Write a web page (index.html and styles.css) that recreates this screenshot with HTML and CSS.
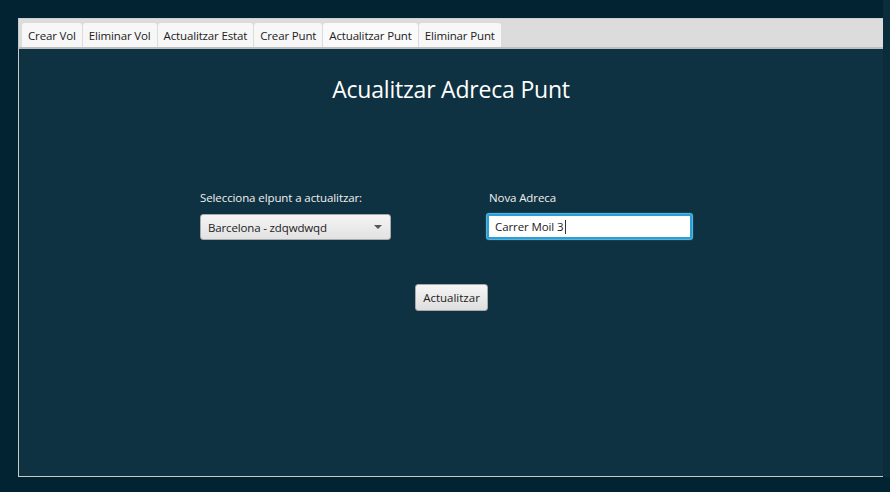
FILE: index.html
```html
<!DOCTYPE html>
<html>
<head>
<meta charset="utf-8">
<link rel="stylesheet" href="styles.css">
</head>
<body>
<div class="stage">
  <div class="window">
    <div class="tabbar">
      <div class="tab">Crear Vol</div>
      <div class="tab">Eliminar Vol</div>
      <div class="tab">Actualitzar Estat</div>
      <div class="tab">Crear Punt</div>
      <div class="tab active">Actualitzar Punt</div>
      <div class="tab">Eliminar Punt</div>
    </div>
    <div class="content">
      <h1 class="title">Acualitzar Adreca Punt</h1>
      <div class="form">
        <div class="field">
          <div class="label">Selecciona elpunt a actualitzar:</div>
          <div class="combo">
            <span>Barcelona - zdqwdwqd</span>
            <span class="arrow"></span>
          </div>
        </div>
        <div class="field">
          <div class="label indent">Nova Adreca</div>
          <div class="input"><span>Carrer Moil 3</span><span class="caret"></span></div>
        </div>
      </div>
      <div class="actions">
        <div class="button">Actualitzar</div>
      </div>
    </div>
  </div>
  <div class="edge"></div>
</div>
</body>
</html>
```

FILE: styles.css
```css
html, body {
  margin: 0;
  padding: 0;
}
body {
  width: 890px;
  height: 492px;
  overflow: hidden;
  background: #022331;
  font-family: "Open Sans", "Noto Sans", sans-serif;
  font-size: 12px;
  color: #333;
}
.stage {
  display: flex;
  align-items: flex-start;
  padding-left: 18px;
}
.window {
  margin-top: 18px;
  width: 864px;
  height: 458px;
  border-left: 1px solid #c9c9c9;
  border-bottom: 1px solid #c9c9c9;
  display: flex;
  flex-direction: column;
  background: #0f3242;
}
.edge {
  width: 7px;
  height: 477px;
  background: #0b2c3b;
}
.tabbar {
  height: 28px;
  background: #dcdcdc;
  border-top: 1px solid #cfcfcf;
  border-bottom: 2px solid #bdbdbd;
  display: flex;
  align-items: flex-end;
  padding-left: 3px;
  gap: 1px;
}
.tab {
  height: 24px;
  line-height: 25px;
  padding: 0 6px;
  background: #f7f7f7;
  border-radius: 3px 3px 0 0;
  color: #222;
  font-size: 11.5px;
  letter-spacing: -0.15px;
  white-space: nowrap;
}
.tab.active {
  background: #fafafa;
}
.content {
  flex: 1;
  display: flex;
  flex-direction: column;
}
.title {
  margin: 0;
  padding-top: 25px;
  text-align: center;
  font-weight: 400;
  font-size: 23px;
  line-height: 30px;
  color: #ffffff;
  letter-spacing: -0.2px;
}
.form {
  margin-top: 86px;
  margin-left: 181px;
  display: grid;
  grid-template-columns: 191px 205px;
  column-gap: 96px;
}
.label {
  color: #f0f0f0;
  font-size: 11.5px;
  letter-spacing: -0.1px;
  line-height: 16px;
  margin-bottom: 8px;
}
.label.indent {
  padding-left: 2px;
}
.combo {
  height: 24px;
  border: 1px solid #a9a9a9;
  border-radius: 3px;
  background: linear-gradient(#f4f4f4, #e2e2e2);
  display: flex;
  align-items: center;
  justify-content: space-between;
  padding: 0 8px 0 7px;
  color: #222;
  font-size: 11.5px;
  letter-spacing: -0.15px;
}
.arrow {
  width: 0;
  height: 0;
  border-left: 4px solid transparent;
  border-right: 4px solid transparent;
  border-top: 4px solid #555;
}
.input {
  height: 21px;
  border: 2px solid #2b9fd6;
  border-radius: 2px;
  background: #ffffff;
  box-shadow: 0 0 1px 1px #5cc3ee;
  display: flex;
  align-items: center;
  padding-left: 6px;
  color: #222;
  font-size: 11.5px;
  letter-spacing: -0.1px;
}
.caret {
  width: 1px;
  height: 14px;
  background: #333;
  margin-left: 1px;
}
.actions {
  margin-top: 44px;
  display: flex;
  justify-content: center;
  padding-left: 1px;
}
.button {
  height: 25px;
  line-height: 25px;
  padding: 0 7px;
  border: 1px solid #a9a9a9;
  border-radius: 3px;
  background: linear-gradient(#f6f6f6, #dedede);
  color: #222;
  font-size: 11.5px;
  letter-spacing: 0;
}
```
